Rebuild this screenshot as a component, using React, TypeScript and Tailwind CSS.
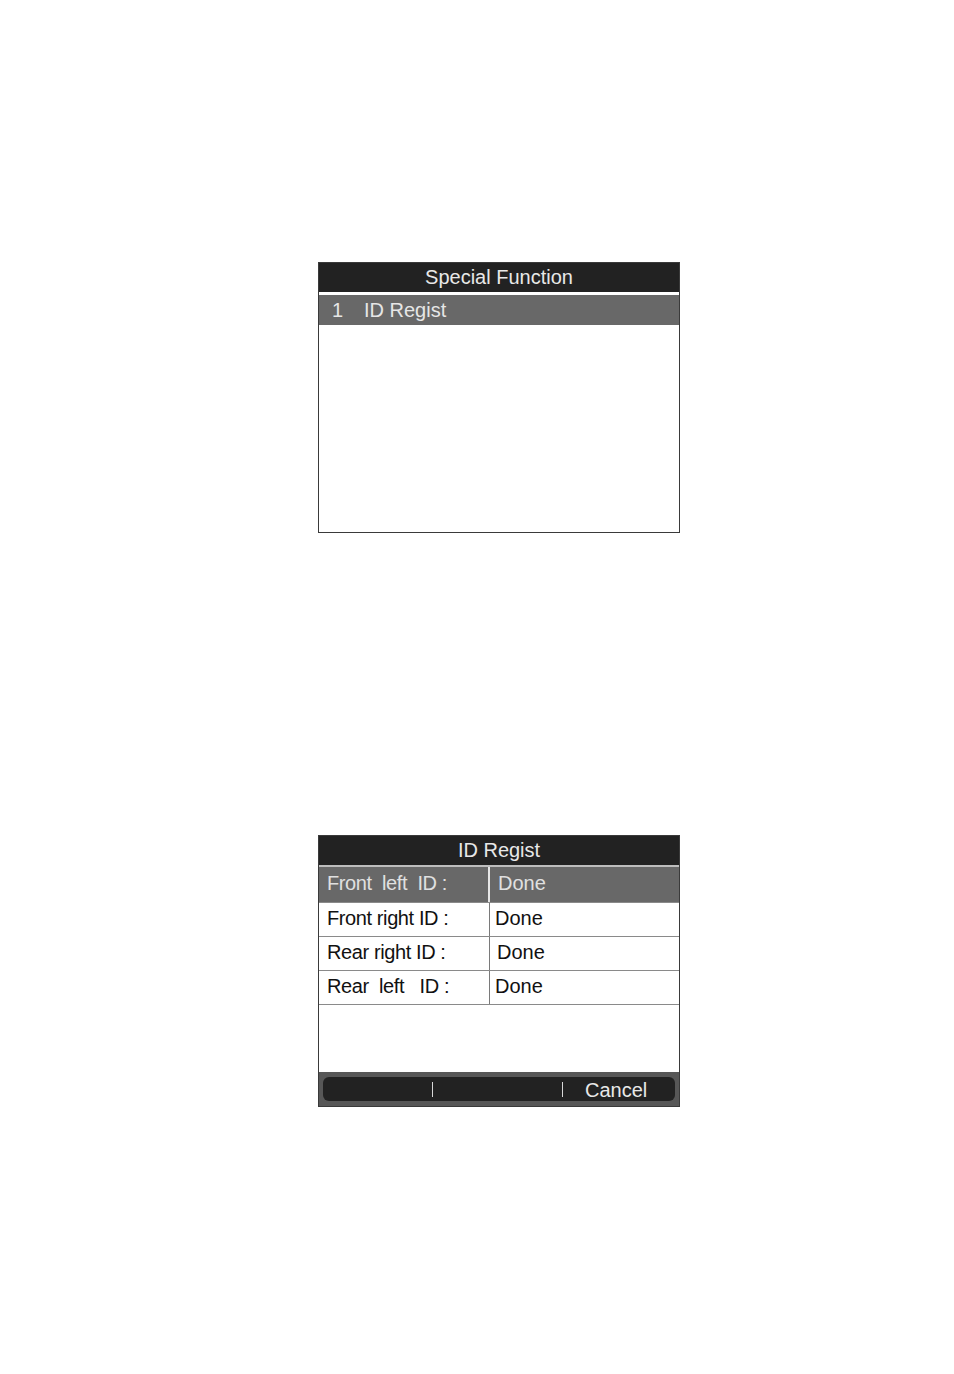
export default function App() {
  const rows = [
    { label: "Front  left  ID :", value: "Done", active: true, pad: "pl-[8px]" },
    { label: "Front right ID :", value: "Done", active: false, pad: "pl-[5px]" },
    { label: "Rear right ID :", value: "Done", active: false, pad: "pl-[7px]" },
    { label: "Rear  left   ID :", value: "Done", active: false, pad: "pl-[5px]" },
  ];

  return (
    <div
      className="w-full min-h-[1374px] bg-white flex flex-col items-center pt-[262px]"
      style={{ fontFamily: '"Liberation Sans", Arial, sans-serif' }}
    >
      {/* Special Function screen */}
      <div className="w-[362px] h-[271px] ml-[44px] border border-[#3a3a3a] flex flex-col bg-white">
        <div className="h-[29px] bg-[#222222] text-[#e8e8e8] text-[20px] leading-[29px] text-center">
          Special Function
        </div>
        <div className="h-[3px] bg-white" />
        <div className="h-[30px] bg-[#686868] text-[#e6e6e6] text-[20px] leading-[30px] flex">
          <span className="pl-[13px] w-[45px]">1</span>
          <span>ID Regist</span>
        </div>
      </div>

      {/* ID Regist screen */}
      <div className="w-[362px] h-[272px] ml-[44px] mt-[302px] border border-[#3a3a3a] flex flex-col bg-white">
        <div className="h-[29px] bg-[#222222] text-[#e8e8e8] text-[20px] leading-[29px] text-center">
          ID Regist
        </div>
        <div className="h-[2px] bg-[#bdbdbd]" />
        {rows.map((r, i) => (
          <div
            key={i}
            className={
              r.active
                ? "h-[35px] bg-[#686868] text-[#e0e0e0] flex text-[20px] leading-[33px]"
                : "h-[34px] border-t border-[#8a8a8a] text-[#111111] flex text-[20px] leading-[31px]"
            }
          >
            <div
              className={
                r.active
                  ? "w-[171px] pl-[8px] whitespace-pre tracking-[-0.4px] border-r-2 border-[#e6e6e6]"
                  : "w-[171px] pl-[8px] whitespace-pre tracking-[-0.4px] border-r border-[#7a7a7a]"
              }
            >
              {r.label}
            </div>
            <div className={r.pad}>{r.value}</div>
          </div>
        ))}
        <div className="flex-1 border-t border-[#8a8a8a]" />
        <div className="h-[34px] bg-[#575757] px-[4px] py-[5px]">
          <div className="h-full bg-[#222222] rounded-[6px] flex items-center text-[20px] text-[#e8e8e8]">
            <div className="w-[109px]" />
            <div className="w-[1px] h-[15px] bg-[#d8d8d8]" />
            <div className="w-[129px]" />
            <div className="w-[1px] h-[15px] bg-[#d8d8d8]" />
            <div className="pl-[22px] leading-none pt-[2px]">Cancel</div>
          </div>
        </div>
      </div>
    </div>
  );
}
